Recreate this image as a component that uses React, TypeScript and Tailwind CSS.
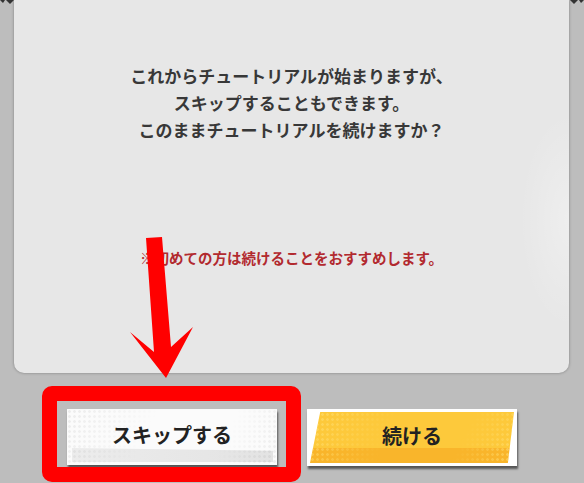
import React from 'react';

const jp = "font-['Noto_Sans_CJK_JP','Noto_Sans',sans-serif]";

// halftone dot layer used on both buttons
function Dots({ tone }: { tone: string }) {
  return (
    <div
      className={`absolute inset-0 bg-[length:5px_5px] [mask-image:linear-gradient(115deg,black_0%,transparent_40%,transparent_72%,black_100%)] ${tone}`}
      aria-hidden="true"
    />
  );
}

function SkipButton() {
  return (
    <button
      type="button"
      className="relative w-[210px] h-[56px] bg-[#fbfbfb] shadow-[1px_3px_2px_rgba(0,0,0,0.55)] overflow-hidden"
    >
      <div className="absolute left-[5px] right-[4px] top-[39px] bottom-[3px] bg-[linear-gradient(to_right,#ececec,#e3e3e3)] [clip-path:polygon(0_0,100%_20%,100%_100%,0_100%)]" />
      <Dots tone="bg-[radial-gradient(circle,rgba(0,0,0,0.06)_1.1px,transparent_1.6px)]" />
      <span className={`relative ${jp} text-[20px] font-bold text-[#222] leading-none`}>
        スキップする
      </span>
    </button>
  );
}

function ContinueButton() {
  return (
    <button
      type="button"
      className="relative w-[210px] h-[57px] bg-white shadow-[1px_3px_2px_rgba(0,0,0,0.55)]"
    >
      <div className="absolute inset-[3px] overflow-hidden [clip-path:polygon(5%_0,100%_0,97%_100%,0_100%)] bg-[linear-gradient(to_bottom,#fdc93b_0%,#fdc93b_71%,#f9b52b_71%,#f9b52b_100%)]">
        <Dots tone="bg-[radial-gradient(circle,rgba(255,225,120,0.6)_1.1px,transparent_1.6px)]" />
      </div>
      <span className={`relative ${jp} text-[20px] font-bold text-[#222] leading-none`}>
        続ける
      </span>
    </button>
  );
}

export default function App() {
  return (
    <div className="relative w-[584px] h-[483px] overflow-hidden bg-[#bdbdbd]">
      {/* edge ornaments peeking in at the top corners */}
      <svg className="absolute left-0 top-0" width="16" height="5" viewBox="0 0 16 5" aria-hidden="true">
        <path d="M0 0 H5 L3 3 Z M6 0 H14 L10 4 Z" fill="#333" />
      </svg>
      <svg className="absolute right-0 top-0" width="16" height="5" viewBox="0 0 16 5" aria-hidden="true">
        <path d="M2 0 H10 L6 4 Z M11 0 H16 L13 3 Z" fill="#333" />
      </svg>

      {/* dialog panel */}
      <div className="relative mx-[14px] w-[555px] h-[373px] rounded-b-[10px] bg-[#e7e7e7] shadow-[0_0_3px_rgba(0,0,0,0.35)] flex flex-col items-center pt-[62px] overflow-hidden">
        <div className="absolute right-0 top-[110px] w-[50px] h-[220px] bg-[radial-gradient(ellipse_at_right,rgba(255,255,255,0.3),transparent_70%)]" />
        <p className={`relative ${jp} text-[17px] leading-[27px] font-bold text-[#383838] text-center`}>
          これからチュートリアルが始まりますが、
          <br />
          スキップすることもできます。
          <br />
          このままチュートリアルを続けますか？
        </p>
        <p className={`relative mt-[105px] ${jp} text-[14.5px] leading-[20px] font-bold text-[#b22a2f] text-center`}>
          ※初めての方は続けることをおすすめします。
        </p>
      </div>

      {/* choice buttons */}
      <div className="flex gap-[30px] pl-[67px] mt-[36px]">
        <SkipButton />
        <ContinueButton />
      </div>

      {/* red highlight frame */}
      <div className="absolute left-[42px] top-[386px] w-[259px] h-[96px] border-[15px] border-[#ff0000] rounded-[10px] pointer-events-none" />

      {/* red pointer arrow */}
      <svg
        className="absolute left-0 top-0 pointer-events-none"
        width="584"
        height="483"
        viewBox="0 0 584 483"
        aria-hidden="true"
      >
        <polygon
          points="146,238 162,237 171,347 193,327 166,378 130,332 154,352"
          fill="#ff0000"
        />
      </svg>
    </div>
  );
}
